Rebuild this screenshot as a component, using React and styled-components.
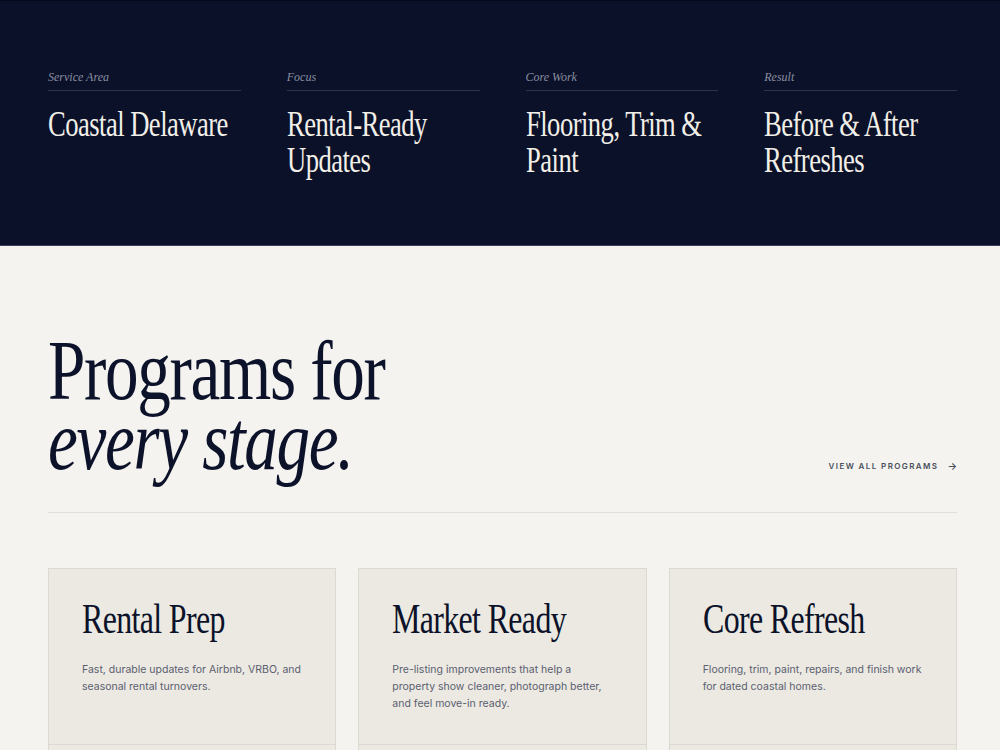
import React from "react";
import styled, { createGlobalStyle } from "styled-components";

const GlobalStyle = createGlobalStyle`
  * { box-sizing: border-box; }
  body {
    margin: 0;
    background: #f4f3ef;
    font-family: Inter, "Noto Sans", sans-serif;
    -webkit-font-smoothing: antialiased;
  }
`;

const serif = `"Liberation Serif", "DejaVu Serif", serif`;

const facts = [
  { label: "Service Area", value: ["Coastal Delaware"] },
  { label: "Focus", value: ["Rental-Ready", "Updates"] },
  { label: "Core Work", value: ["Flooring, Trim &", "Paint"] },
  { label: "Result", value: ["Before & After", "Refreshes"] },
];

const programs = [
  {
    title: "Rental Prep",
    text: "Fast, durable updates for Airbnb, VRBO, and seasonal rental turnovers.",
  },
  {
    title: "Market Ready",
    text: "Pre-listing improvements that help a property show cleaner, photograph better, and feel move-in ready.",
  },
  {
    title: "Core Refresh",
    text: "Flooring, trim, paint, repairs, and finish work for dated coastal homes.",
  },
];

const Inner = styled.div`
  padding: 0 43px 0 48px;
`;

const FactBand = styled.section`
  background: #0b1128;
  border-top: 1px solid #060a1c;
  border-bottom: 1px solid #3a3f5c;
  padding: 68px 0 66px;
`;

const FactGrid = styled.div`
  display: grid;
  grid-template-columns: repeat(4, minmax(0, 1fr));
  column-gap: 46px;
`;

const Fact = styled.div`
  display: flex;
  flex-direction: column;
  min-width: 0;
`;

const FactLabel = styled.div`
  font-family: ${serif};
  font-style: italic;
  font-size: 12px;
  line-height: 16px;
  color: #8a8fa3;
  padding-bottom: 5px;
  border-bottom: 1px solid #2e3450;
`;

// display serif narrowed horizontally to read like a condensed face
const Squeeze = styled.span`
  display: inline-block;
  white-space: nowrap;
  transform: scaleX(${(p) => p.$x});
  transform-origin: left center;
`;

const FactValue = styled.div`
  margin-top: 16px;
  font-family: ${serif};
  font-size: 35px;
  line-height: 36px;
  letter-spacing: -0.02em;
  color: #f1efe8;
`;

const Programs = styled.section`
  padding: 90px 0 80px;
`;

const Header = styled.div`
  display: flex;
  justify-content: space-between;
  align-items: flex-end;
  padding-bottom: 36px;
  border-bottom: 1px solid #e1dfd8;
`;

const Heading = styled.h2`
  margin: 0;
  font-family: ${serif};
  font-weight: 400;
  font-size: 84px;
  line-height: 70px;
  letter-spacing: -0.02em;
  color: #0c1229;

  em {
    font-style: italic;
  }
`;

const ViewAll = styled.a`
  display: flex;
  align-items: center;
  gap: 9px;
  margin-bottom: 4px;
  font-size: 8px;
  font-weight: 600;
  letter-spacing: 1.4px;
  text-transform: uppercase;
  color: #4a4f5e;
  text-decoration: none;
`;

const Arrow = styled.span`
  font-size: 10px;
  letter-spacing: 0;
`;

const CardRow = styled.div`
  display: grid;
  grid-template-columns: repeat(3, minmax(0, 1fr));
  gap: 22px;
  margin-top: 55px;
`;

const Card = styled.article`
  min-width: 0;
  background: #ebe9e2;
  border: 1px solid #dcd9d1;
  display: flex;
  flex-direction: column;
`;

const CardBody = styled.div`
  min-height: 175px;
  padding: 27px 33px 20px 33px;
`;

const CardTitle = styled.h3`
  margin: 0;
  font-family: ${serif};
  font-weight: 400;
  font-size: 42px;
  line-height: 46px;
  letter-spacing: -0.02em;
  color: #0c1229;
`;

const CardText = styled.p`
  margin: 19px 0 0;
  font-size: 10.5px;
  line-height: 17px;
  color: #5b6070;
`;

const CardFoot = styled.div`
  border-top: 1px solid #dcd9d1;
  padding: 26px 33px 18px;
  font-size: 8px;
  font-weight: 600;
  letter-spacing: 1.4px;
  text-transform: uppercase;
  color: #4a4f5e;
`;

export default function App() {
  return (
    <>
      <GlobalStyle />
      <FactBand>
        <Inner>
          <FactGrid>
            {facts.map((f) => (
              <Fact key={f.label}>
                <FactLabel>{f.label}</FactLabel>
                <FactValue>
                  <Squeeze $x={0.76}>
                    {f.value.map((line, i) => (
                      <React.Fragment key={line}>
                        {i > 0 && <br />}
                        {line}
                      </React.Fragment>
                    ))}
                  </Squeeze>
                </FactValue>
              </Fact>
            ))}
          </FactGrid>
        </Inner>
      </FactBand>

      <Programs>
        <Inner>
          <Header>
            <Heading>
              <Squeeze $x={0.8}>
                Programs for
                <br />
                <em>every stage.</em>
              </Squeeze>
            </Heading>
            <ViewAll href="#programs">
              View all programs <Arrow>→</Arrow>
            </ViewAll>
          </Header>

          <CardRow>
            {programs.map((p) => (
              <Card key={p.title}>
                <CardBody>
                  <CardTitle>
                    <Squeeze $x={0.76}>{p.title}</Squeeze>
                  </CardTitle>
                  <CardText>{p.text}</CardText>
                </CardBody>
                <CardFoot>Learn more →</CardFoot>
              </Card>
            ))}
          </CardRow>
        </Inner>
      </Programs>
    </>
  );
}
